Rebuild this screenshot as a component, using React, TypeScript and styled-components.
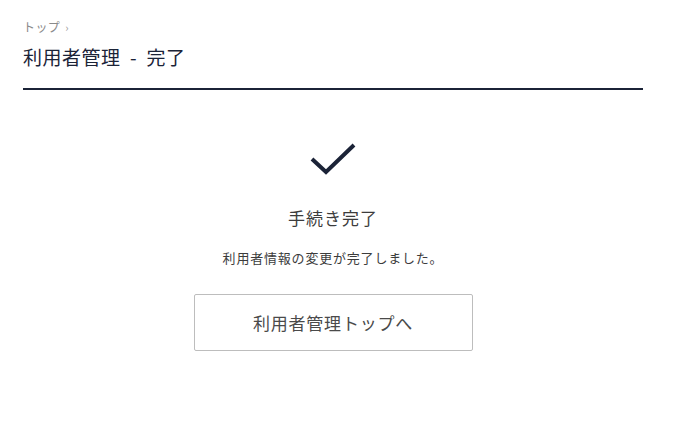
import React from "react";
import styled, { createGlobalStyle } from "styled-components";

const Global = createGlobalStyle`
  html, body { margin: 0; padding: 0; background: #fff; }
  body { font-family: "Noto Sans CJK JP", "Noto Sans", sans-serif; }
`;

const Page = styled.div`
  width: 620px;
  padding: 0 35px 0 23px;
`;

const Breadcrumb = styled.nav`
  display: flex;
  align-items: center;
  gap: 5px;
  padding-top: 18px;
  height: 18px;
  font-size: 12px;
  line-height: 18px;
  letter-spacing: 0.4px;
  color: #8a8a8a;
`;

const Chevron = styled.span`
  font-size: 11px;
  color: #9a9a9a;
`;

const Title = styled.h1`
  margin: 0;
  padding-top: 8px;
  padding-bottom: 18px;
  font-size: 19px;
  line-height: 26px;
  letter-spacing: 0.5px;
  font-weight: 400;
  color: #1b2337;
  border-bottom: 2px solid #1b2337;
  white-space: pre;
`;

const Body = styled.section`
  display: flex;
  flex-direction: column;
  align-items: center;
  padding-top: 52px;
`;

const Check = styled.svg`
  display: block;
  width: 48px;
  height: 36px;
`;

const Heading = styled.h2`
  margin: 28px 0 0;
  font-size: 17px;
  line-height: 24px;
  letter-spacing: 1px;
  font-weight: 400;
  color: #3c3c3c;
`;

const Message = styled.p`
  margin: 18px 0 0;
  font-size: 13px;
  line-height: 20px;
  letter-spacing: 0.8px;
  color: #3c3c3c;
`;

const Button = styled.button`
  margin-top: 26px;
  width: 279px;
  height: 57px;
  border: 1px solid #bdbdbd;
  border-radius: 2px;
  background: #fff;
  font-family: inherit;
  font-size: 17px;
  letter-spacing: 0.8px;
  color: #4a4a4a;
  cursor: pointer;
`;

export default function App() {
  return (
    <>
      <Global />
      <Page>
        <Breadcrumb>
          <span>トップ</span>
          <Chevron>›</Chevron>
        </Breadcrumb>
        <Title>{"利用者管理  -  完了"}</Title>
        <Body>
          <Check viewBox="0 0 48 36">
            <polyline
              points="3,17 17,30 45,3"
              fill="none"
              stroke="#1b2337"
              strokeWidth="4"
            />
          </Check>
          <Heading>手続き完了</Heading>
          <Message>利用者情報の変更が完了しました。</Message>
          <Button>利用者管理トップへ</Button>
        </Body>
      </Page>
    </>
  );
}
